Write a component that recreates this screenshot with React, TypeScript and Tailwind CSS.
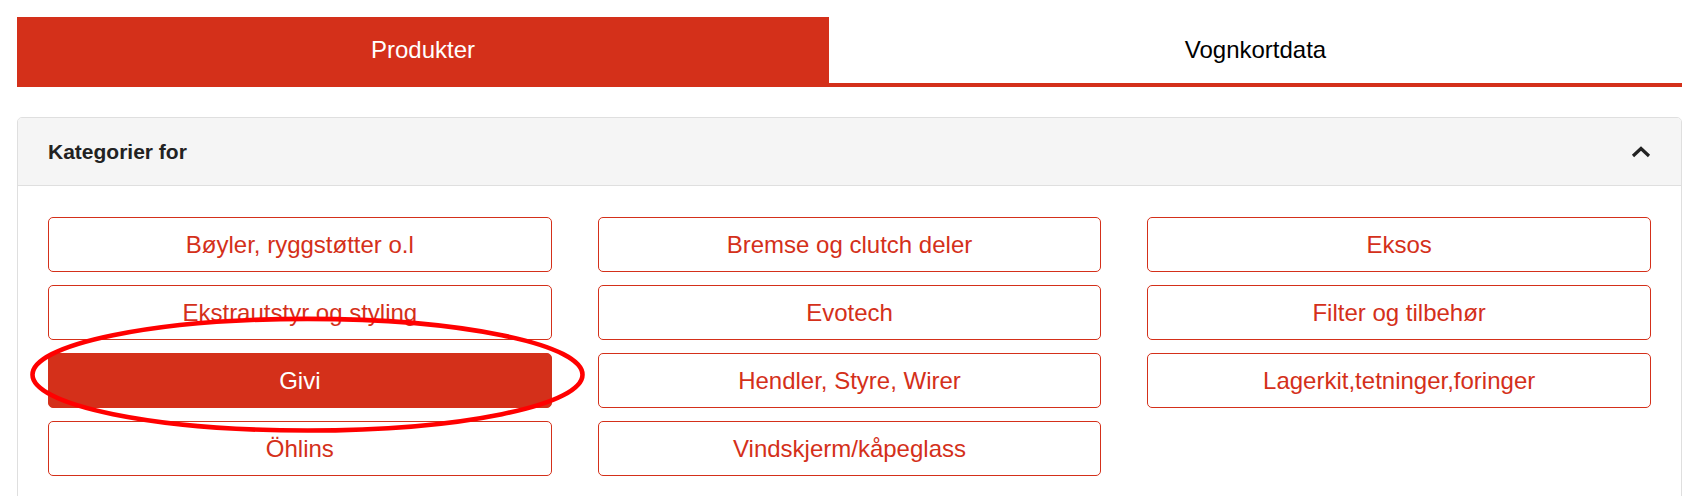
import React from "react";

const cats: string[] = [
  "Bøyler, ryggstøtter o.l",
  "Bremse og clutch deler",
  "Eksos",
  "Ekstrautstyr og styling",
  "Evotech",
  "Filter og tilbehør",
  "Givi",
  "Hendler, Styre, Wirer",
  "Lagerkit,tetninger,foringer",
  "Öhlins",
  "Vindskjerm/kåpeglass",
];

export default function App() {
  return (
    <div
      className="relative bg-white min-h-[496px] pl-[17px] pr-[9px] pt-[17px] overflow-hidden"
      style={{ fontFamily: '"Liberation Sans", Arial, sans-serif' }}
    >
      {/* Tabs */}
      <div className="flex h-[70px] border-b-4 border-[#d4301a]">
        <div className="w-[812px] shrink-0 flex items-center justify-center bg-[#d4301a] text-white text-[24px]">
          Produkter
        </div>
        <div className="flex-1 flex items-center justify-center text-black text-[24px]">
          Vognkortdata
        </div>
      </div>

      {/* Card */}
      <div className="mt-[30px] border border-[#dfdfdf] rounded-[5px] overflow-hidden">
        <div className="flex items-center justify-between h-[68px] px-[30px] bg-[#f5f5f5] border-b border-[#dfdfdf]">
          <span className="font-bold text-[21px] text-[#222]">Kategorier for</span>
          <svg width="20" height="12" viewBox="0 0 20 12">
            <path d="M2 10 L10 2.5 L18 10" fill="none" stroke="#222" strokeWidth="3.2" />
          </svg>
        </div>
        <div className="grid grid-cols-3 gap-x-[46px] gap-y-[13px] px-[30px] pt-[31px] pb-[30px]">
          {cats.map((c) =>
            c === "Givi" ? (
              <div
                key={c}
                className="h-[55px] flex items-center justify-center rounded-[5px] border border-[#d4301a] bg-[#d4301a] text-white text-[24px]"
              >
                {c}
              </div>
            ) : (
              <div
                key={c}
                className="h-[55px] flex items-center justify-center rounded-[5px] border border-[#d4301a] bg-white text-[#d4301a] text-[24px]"
              >
                {c}
              </div>
            )
          )}
        </div>
      </div>

      {/* Annotation ellipse */}
      <svg
        className="absolute left-0 top-0 pointer-events-none"
        width="1691"
        height="496"
        viewBox="0 0 1691 496"
      >
        <ellipse cx="307.5" cy="374.7" rx="275" ry="55.8" fill="none" stroke="#ff0000" strokeWidth="4.6" />
      </svg>
    </div>
  );
}
